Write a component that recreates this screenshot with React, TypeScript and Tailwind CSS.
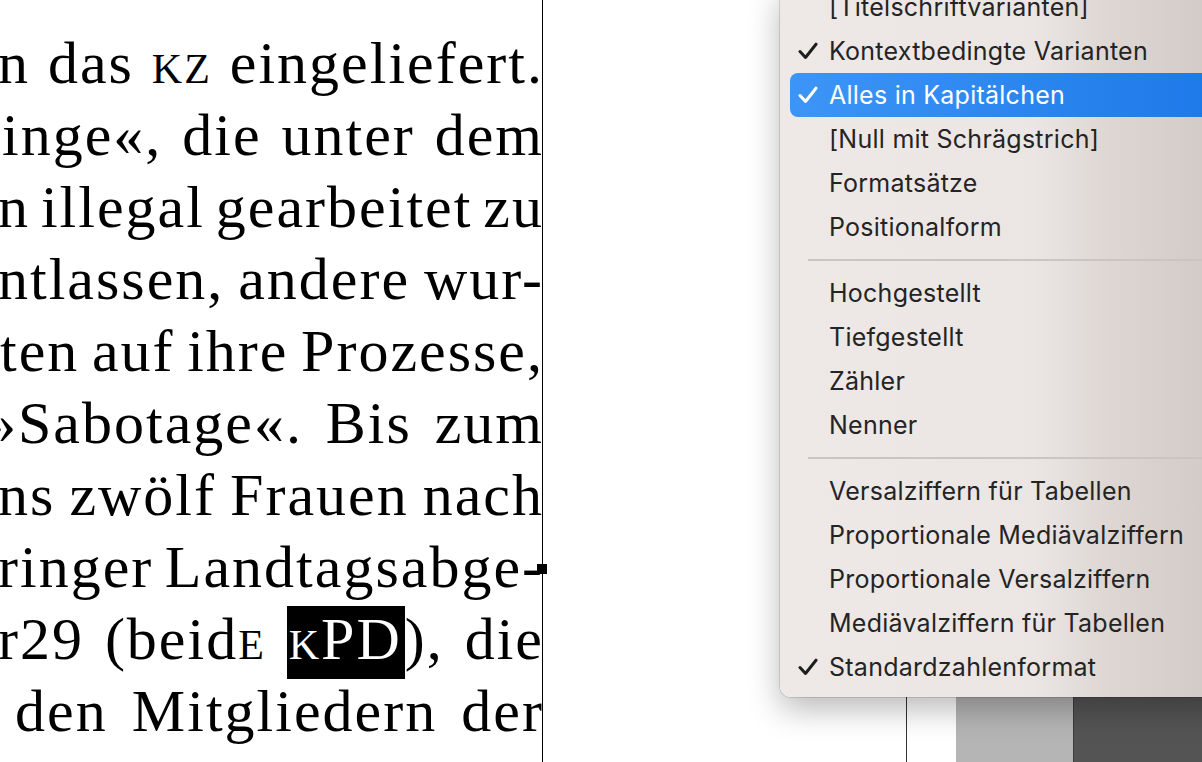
import type { ReactNode } from "react";

const serif = "font-['Liberation_Serif',_'Times_New_Roman',_serif]";
const sans = "font-['Inter',_'Noto_Sans',_sans-serif]";

function Sc({ children }: { children: ReactNode }) {
    return <span className="[font-variant-caps:small-caps]">{children}</span>;
}

const lines: { words: ReactNode[]; pad?: string }[] = [
    { words: ["n", "das", <Sc key="kz">kz</Sc>, "eingeliefert."], pad: "-ml-[2px]" },
    { words: ["inge«,", "die", "unter", "dem"], pad: "ml-[2px]" },
    { words: ["n", "illegal", "gearbeitet", "zu"], pad: "-ml-[2px]" },
    { words: ["ntlassen,", "andere", "wur-"], pad: "-ml-[2px]" },
    { words: ["ten", "auf", "ihre", "Prozesse,"] },
    { words: ["»Sabotage«.", "Bis", "zum"], pad: "-ml-[14px]" },
    { words: ["ns", "zwölf", "Frauen", "nach"], pad: "-ml-[2px]" },
    { words: ["ringer", "Landtagsabge-"], pad: "-ml-[2px]" },
    {
        words: [
            "r29",
            <span key="b">
                (beid<Sc>e</Sc>
            </span>,
            <span key="kpd">
                <span className="inline-block bg-black text-white h-[73px] leading-[66px] align-top mt-[3px] pl-[2px] pr-[3px]">
                    <Sc>k</Sc>PD
                </span>
                ),
            </span>,
            "die",
        ],
        pad: "-ml-[2px]",
    },
    { words: ["den", "Mitgliedern", "der"], pad: "ml-[15px]" },
];

type Item = { label: string; checked?: boolean; active?: boolean } | "sep";

const menu: Item[] = [
    { label: "[Titelschriftvarianten]" },
    { label: "Kontextbedingte Varianten", checked: true },
    { label: "Alles in Kapitälchen", checked: true, active: true },
    { label: "[Null mit Schrägstrich]" },
    { label: "Formatsätze" },
    { label: "Positionalform" },
    "sep",
    { label: "Hochgestellt" },
    { label: "Tiefgestellt" },
    { label: "Zähler" },
    { label: "Nenner" },
    "sep",
    { label: "Versalziffern für Tabellen" },
    { label: "Proportionale Mediävalziffern" },
    { label: "Proportionale Versalziffern" },
    { label: "Mediävalziffern für Tabellen" },
    { label: "Standardzahlenformat", checked: true },
];

function Check({ white }: { white?: boolean }) {
    return (
        <svg width="20" height="18" viewBox="0 0 20 18" className="shrink-0">
            <path
                d="M2 9.5 L7.5 15.5 L18 2.2"
                fill="none"
                stroke={white ? "#ffffff" : "#1e1e1e"}
                strokeWidth="3"
                strokeLinecap="round"
                strokeLinejoin="round"
            />
        </svg>
    );
}

export default function App() {
    return (
        <div className="relative w-[1202px] h-[762px] overflow-hidden bg-white flex">
            {/* text frame */}
            <div className="w-[543px] h-full shrink-0 border-r border-black overflow-hidden">
                <div className={`${serif} text-[60px] leading-[72px] tracking-[2px] text-black pt-[27px] w-[544px]`}>
                    {lines.map((line, i) => (
                        <div key={i} className={`flex justify-between whitespace-nowrap h-[72px] ${line.pad ?? ""}`}>
                            {line.words.map((w, j) => (
                                <span key={j}>{w}</span>
                            ))}
                        </div>
                    ))}
                </div>
            </div>

            {/* pasteboard */}
            <div className="w-[364px] h-full shrink-0 border-r border-[#333]" />
            <div className="w-[49px] h-full shrink-0" />
            <div className="w-[117px] h-full shrink-0 bg-[#b5b5b5]" />
            <div className="flex-1 h-full bg-[#545454] border-l border-[#3c3c3c]" />

            {/* overset marker */}
            <div className="absolute left-[537px] top-[564px] w-[10px] h-[10px] bg-black" />

            {/* context menu */}
            <div
                className={`${sans} absolute left-[780px] bottom-[65px] w-[460px] rounded-[11px] pb-[8px] px-[10px] text-[25px] tracking-[0.25px] text-[#242424] bg-[linear-gradient(to_right,#eee9e7_0%,#ebe6e4_55%,#ddd6d3_72%,#cec7c4_100%)] shadow-[0_12px_32px_rgba(0,0,0,0.28),0_0_0_1px_rgba(0,0,0,0.12)]`}
            >
                {menu.map((it, i) =>
                    it === "sep" ? (
                        <div key={i} className="h-[22px] flex items-center pl-[18px]">
                            <div className="h-[2px] w-full bg-[#cbc5c2]" />
                        </div>
                    ) : (
                        <div
                            key={i}
                            className={`h-[44px] flex items-center rounded-[8px] ${
                                it.active
                                    ? "bg-[linear-gradient(to_right,#3c95f6,#1d78e8)] text-white"
                                    : ""
                            }`}
                        >
                            <div className="w-[39px] pl-[8px] flex items-center">
                                {it.checked && <Check white={it.active} />}
                            </div>
                            <span className="leading-[44px] whitespace-nowrap">{it.label}</span>
                        </div>
                    )
                )}
            </div>
        </div>
    );
}
